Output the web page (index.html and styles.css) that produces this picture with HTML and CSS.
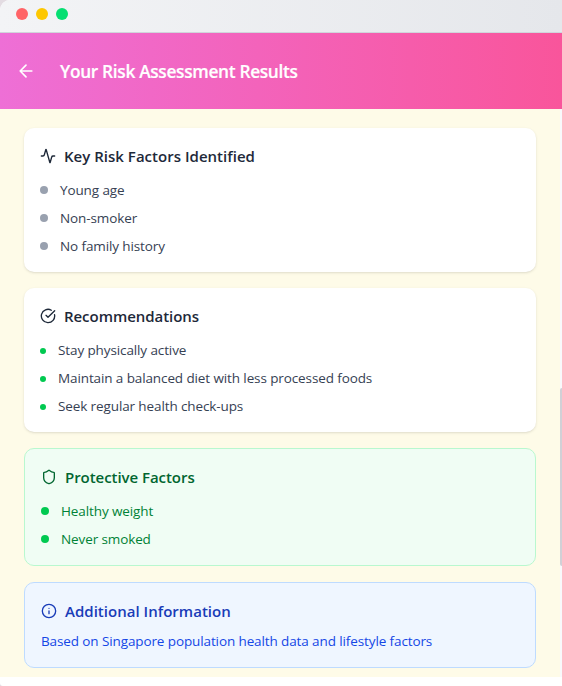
FILE: index.html
```html
<!DOCTYPE html>
<html lang="en">
<head>
<meta charset="utf-8">
<title>Your Risk Assessment Results</title>
<link rel="stylesheet" href="styles.css">
</head>
<body>
<div class="window">
  <div class="titlebar"><i class="light red"></i><i class="light yellow"></i><i class="light green"></i></div>
  <header class="header">
    <svg class="back" viewBox="0 0 24 24"><path d="m12 19-7-7 7-7M19 12H5"/></svg>
    <h1>Your Risk Assessment Results</h1>
  </header>
  <div class="body">
    <main class="content">
      <section class="card">
        <h2><svg class="icon" viewBox="0 0 24 24"><path d="M22 12h-2.48a2 2 0 0 0-1.93 1.46l-2.35 8.36a.25.25 0 0 1-.48 0L9.24 2.18a.25.25 0 0 0-.48 0l-2.35 8.36A2 2 0 0 1 4.49 12H2"/></svg><span>Key Risk Factors Identified</span></h2>
        <ul>
          <li><span>Young age</span></li>
          <li><span>Non-smoker</span></li>
          <li><span>No family history</span></li>
        </ul>
      </section>
      <section class="card recommendations">
        <h2><svg class="icon" viewBox="0 0 24 24"><path d="M21.801 10A10 10 0 1 1 17 3.335"/><path d="m9 11 3 3L22 4"/></svg><span>Recommendations</span></h2>
        <ul>
          <li><span>Stay physically active</span></li>
          <li><span>Maintain a balanced diet with less processed foods</span></li>
          <li><span>Seek regular health check-ups</span></li>
        </ul>
      </section>
      <section class="card protective">
        <h2><svg class="icon" viewBox="0 0 24 24"><path d="M20 13c0 5-3.5 7.5-7.66 8.95a1 1 0 0 1-.67-.01C7.5 20.5 4 18 4 13V6a1 1 0 0 1 1-1c2 0 4.5-1.2 6.24-2.72a1.17 1.17 0 0 1 1.52 0C14.51 3.81 17 5 19 5a1 1 0 0 1 1 1z"/></svg><span>Protective Factors</span></h2>
        <ul>
          <li><span>Healthy weight</span></li>
          <li><span>Never smoked</span></li>
        </ul>
      </section>
      <section class="card info">
        <h2><svg class="icon" viewBox="0 0 24 24"><circle cx="12" cy="12" r="10"/><path d="M12 16v-4M12 8h.01"/></svg><span>Additional Information</span></h2>
        <p>Based on Singapore population health data and lifestyle factors</p>
      </section>
    </main>
    <div class="track"><div class="thumb"></div></div>
  </div>
</div>
</body>
</html>
```
FILE: styles.css
```css
* { box-sizing: border-box; margin: 0; padding: 0; }
body {
  font-family: "Segoe UI", "Open Sans", "Noto Sans", sans-serif;
  background: #e3dce2;
  overflow: hidden;
}
.window { height: 686px; background: #fff; border-radius: 10px 0 0 3px; overflow: hidden; }
.titlebar {
  height: 33px;
  display: flex;
  gap: 8px;
  padding: 8px 16px;
  background: linear-gradient(to right, #f3f4f6, #e5e7eb);
  border-bottom: 1px solid #d1d5dc;
}
.light { width: 12px; height: 12px; border-radius: 50%; }
.red { background: #ff6467; }
.yellow { background: #fdc700; }
.green { background: #05df72; }
.header {
  height: 76px;
  display: flex;
  align-items: center;
  gap: 24px;
  padding: 0 16px;
  color: #fff;
  background: linear-gradient(to right, #ee6fd6, #f9559b);
}
svg { fill: none; stroke: currentColor; stroke-width: 2; stroke-linecap: round; stroke-linejoin: round; }
.back { width: 20px; height: 20px; }
h1 { padding-top: 2px; font-size: 17.3px; line-height: 28px; font-weight: 600; letter-spacing: -0.32px; -webkit-text-stroke: 0.2px currentColor; }
.body { display: flex; height: 568px; background: #fefbe8; }
.content {
  flex: 1;
  display: flex;
  flex-direction: column;
  gap: 16px;
  padding: 19px 24px 0;
}
.track { width: 2px; background: #f9f9fb; padding-top: 279px; }
.thumb { height: 178px; background: #d1d0d6; border-radius: 2px 0 0 2px; }
.card {
  padding: 16px;
  border-radius: 10px;
  background: #fff;
  color: #1e2939;
  box-shadow: 0 1px 3px rgba(0,0,0,.1), 0 1px 2px -1px rgba(0,0,0,.1);
}
h2 {
  display: flex;
  align-items: center;
  gap: 8px;
  margin-bottom: 12px;
  font-size: 15px;
  line-height: 24px;
  font-weight: 600;
  letter-spacing: 0.02px;
}
.icon { width: 16px; height: 16px; }
ul { list-style: none; display: grid; gap: 8px; }
li { display: flex; align-items: center; gap: 12px; color: #364153; }
li, p { font-size: 13.5px; line-height: 20px; letter-spacing: -0.11px; }
li::before { content: ""; width: 8px; height: 8px; border-radius: 50%; background: #99a1af; }
.recommendations li::before { width: 6px; height: 6px; margin-top: 2px; background: #00c950; }
.protective { background: #f0fdf4; border: 1px solid #b9f8cf; color: #016630; box-shadow: none; }
.recommendations h2, .protective h2 { letter-spacing: -0.05px; }
.protective li { color: #008236; }
.protective li::before { background: #00c950; }
.info { background: #eff6ff; border: 1px solid #bedbff; color: #193cb8; box-shadow: none; }
.info h2 { margin-bottom: 8px; }
.info p { color: #1447e6; }
```
